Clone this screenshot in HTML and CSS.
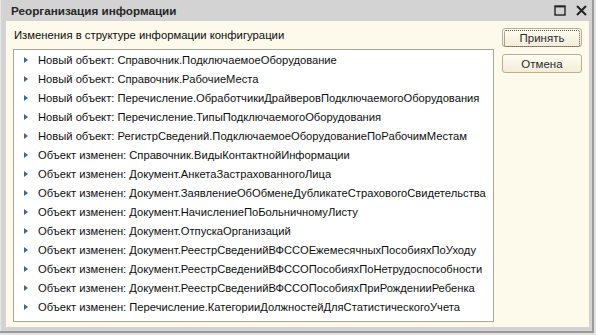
FILE: index.html
```html
<!DOCTYPE html>
<html lang="ru">
<head>
    <meta charset="UTF-8">
    <title>Реорганизация информации</title>
    <link rel="stylesheet" href="styles.css">
</head>
<body>
    <div class="window">
        <div class="titlebar">
            <span class="title">Реорганизация информации</span>
            <span class="tb-icons">
                <svg width="12" height="11" viewBox="0 0 12 11"><rect x="1" y="1" width="10" height="9" fill="none" stroke="#222" stroke-width="1.4"/><line x1="1" y1="1.7" x2="11" y2="1.7" stroke="#222" stroke-width="1.4"/></svg>
                <svg width="11" height="11" viewBox="0 0 11 11"><path d="M1 1 L10 10 M10 1 L1 10" stroke="#222" stroke-width="2"/></svg>
            </span>
        </div>
        <div class="content">
            <div class="main">
                <div class="label">Изменения в структуре информации конфигурации</div>
                <ul class="tree">
                    <li>Новый объект: Справочник.ПодключаемоеОборудование</li>
                    <li>Новый объект: Справочник.РабочиеМеста</li>
                    <li>Новый объект: Перечисление.ОбработчикиДрайверовПодключаемогоОборудования</li>
                    <li>Новый объект: Перечисление.ТипыПодключаемогоОборудования</li>
                    <li>Новый объект: РегистрСведений.ПодключаемоеОборудованиеПоРабочимМестам</li>
                    <li>Объект изменен: Справочник.ВидыКонтактнойИнформации</li>
                    <li>Объект изменен: Документ.АнкетаЗастрахованногоЛица</li>
                    <li>Объект изменен: Документ.ЗаявлениеОбОбменеДубликатеСтраховогоСвидетельства</li>
                    <li>Объект изменен: Документ.НачислениеПоБольничномуЛисту</li>
                    <li>Объект изменен: Документ.ОтпускаОрганизаций</li>
                    <li>Объект изменен: Документ.РеестрСведенийВФССОЕжемесячныхПособияхПоУходу</li>
                    <li>Объект изменен: Документ.РеестрСведенийВФССОПособияхПоНетрудоспособности</li>
                    <li>Объект изменен: Документ.РеестрСведенийВФССОПособияхПриРожденииРебенка</li>
                    <li>Объект изменен: Перечисление.КатегорииДолжностейДляСтатистическогоУчета</li>
                </ul>
            </div>
            <div class="side">
                <button class="btn default"><span>Принять</span></button>
                <button class="btn">Отмена</button>
            </div>
        </div>
    </div>
</body>
</html>
```

FILE: styles.css
```css
body {
    margin: 0;
    font-family: "Liberation Sans", Arial, sans-serif;
    font-size: 11.2px;
    color: #0e0e0e;
}
.window {
    width: 596px;
    height: 335px;
    box-sizing: border-box;
    background: #d3d3d3;
    padding: 0 7px 8px 6px;
    display: flex;
    flex-direction: column;
    box-shadow: inset -2px -2px 0 #e2e2e2, inset -4px -4px 0 #9a9a9a, inset 1px 0 0 #e6e6e6;
}
.titlebar {
    height: 21px;
    display: flex;
    align-items: center;
    justify-content: space-between;
    padding: 0 2px 0 5px;
}
.title {
    font-weight: bold;
    font-size: 11.7px;
    color: #262626;
}
.tb-icons {
    display: flex;
    gap: 10px;
    align-items: center;
}
.tb-icons svg {
    display: block;
}
.content {
    flex: 1;
    background: #fdf9eb;
    display: flex;
    gap: 8px;
    padding: 6px 7px 5px 7px;
}
.main {
    width: 483px;
    display: flex;
    flex-direction: column;
}
.label {
    height: 14px;
    line-height: 14px;
    margin: 1px 0 7px;
    padding-left: 1px;
    font-size: 11.3px;
}
.tree {
    flex: 1;
    margin: 0;
    list-style: none;
    background: #fff;
    border: 1px solid #aaa59a;
    padding: 1px 0 0 0;
}
.tree li {
    height: 19px;
    line-height: 19px;
    padding-left: 24px;
    position: relative;
    white-space: nowrap;
}
.tree li::before {
    content: "";
    position: absolute;
    left: 10px;
    top: 6px;
    border-left: 4px solid #3f6590;
    border-top: 3.5px solid transparent;
    border-bottom: 3.5px solid transparent;
}
.side {
    display: flex;
    flex-direction: column;
    gap: 7px;
    padding-top: 1px;
}
.btn {
    width: 80px;
    height: 19px;
    padding: 0;
    font-family: inherit;
    font-size: 11.5px;
    color: #2a2a2a;
    border: 1px solid #b9ad8e;
    border-radius: 3px;
    background: linear-gradient(#fffdf4, #f3ecd6);
}
.btn.default {
    padding: 1px;
}
.btn.default span {
    display: block;
    height: 15px;
    line-height: 15px;
    border: 1px dotted #555;
    border-radius: 2px;
}
```
